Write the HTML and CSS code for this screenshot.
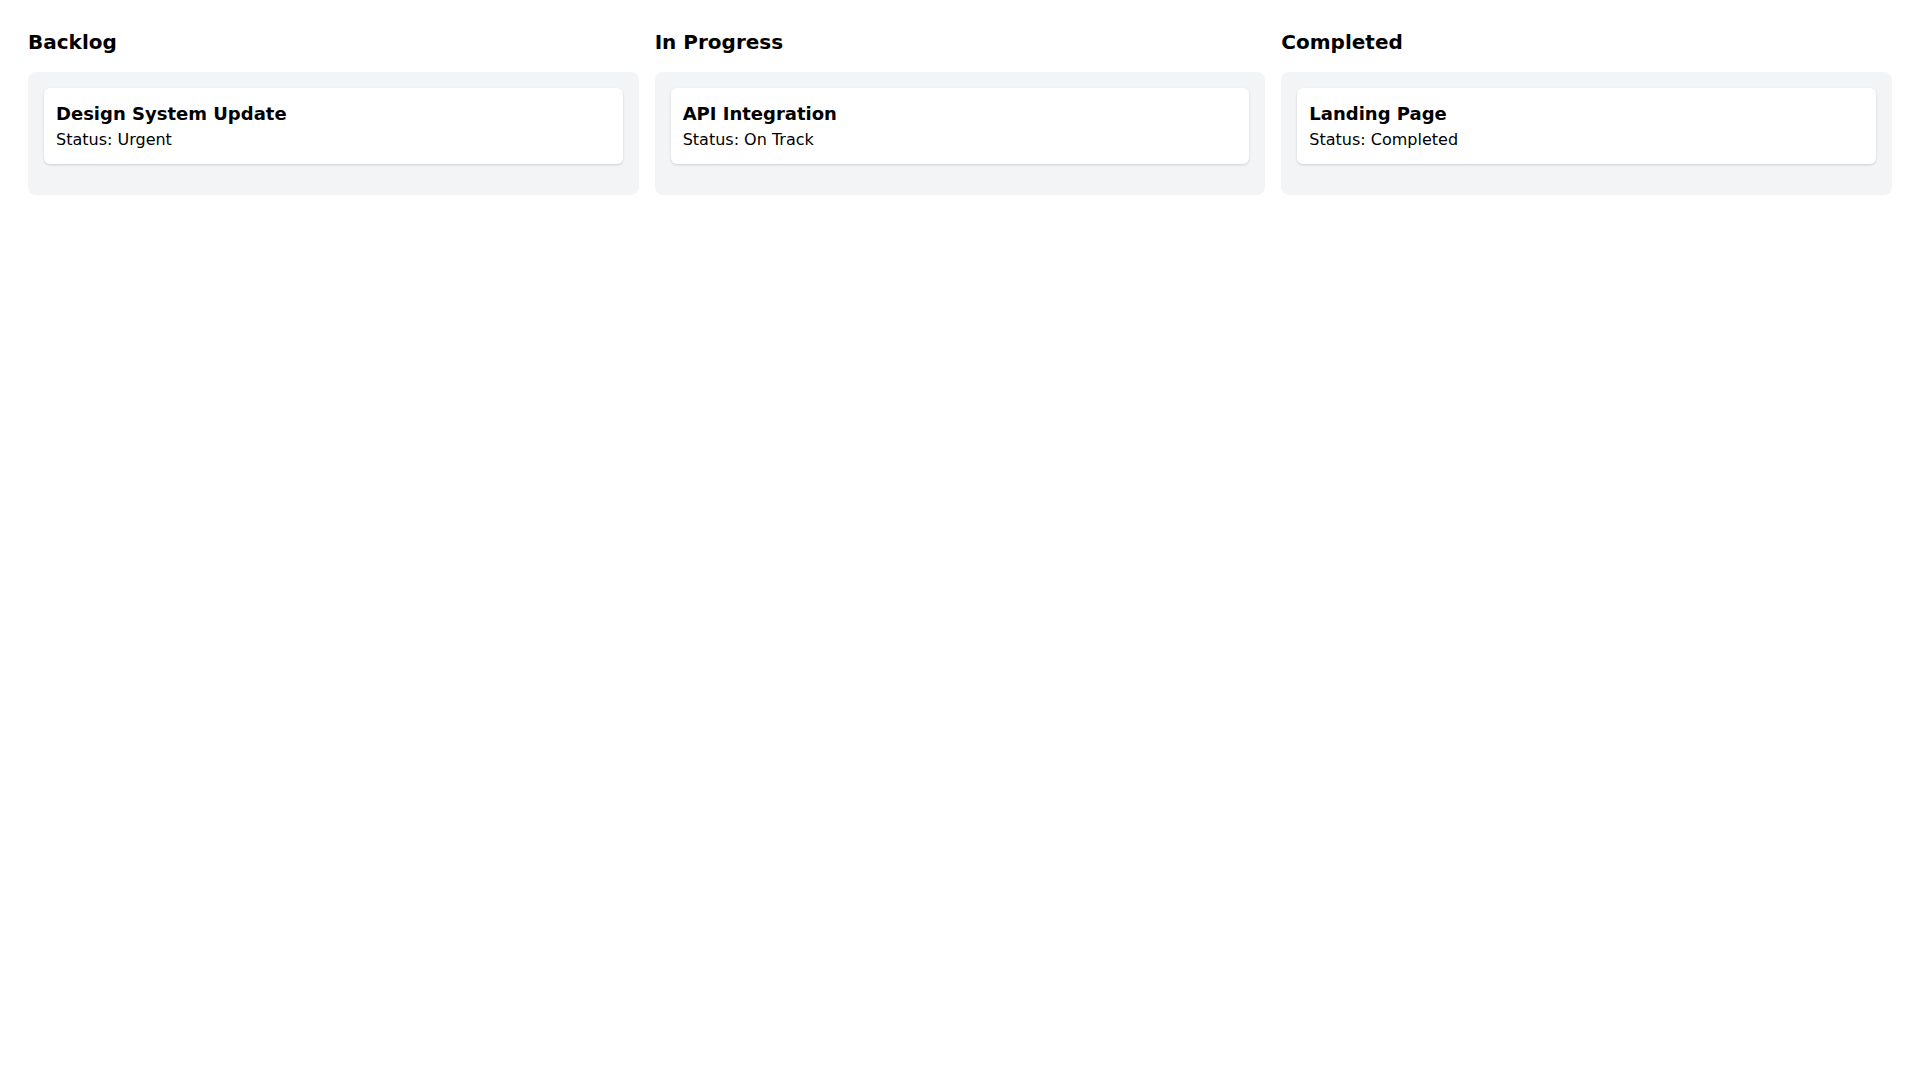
FILE: index.html
```html
<!DOCTYPE html>
<html lang="en">
<head>
<meta charset="utf-8">
<title>Board</title>
<link rel="stylesheet" href="styles.css">
</head>
<body>
<main class="board">
  <section class="column">
    <h2 class="column-title">Backlog</h2>
    <div class="column-body">
      <article class="card">
        <h3 class="card-title">Design System Update</h3>
        <p class="card-status">Status: Urgent</p>
      </article>
    </div>
  </section>
  <section class="column">
    <h2 class="column-title">In Progress</h2>
    <div class="column-body">
      <article class="card">
        <h3 class="card-title">API Integration</h3>
        <p class="card-status">Status: On Track</p>
      </article>
    </div>
  </section>
  <section class="column">
    <h2 class="column-title">Completed</h2>
    <div class="column-body">
      <article class="card">
        <h3 class="card-title">Landing Page</h3>
        <p class="card-status">Status: Completed</p>
      </article>
    </div>
  </section>
</main>
</body>
</html>
```

FILE: styles.css
```css
html, body {
  margin: 0;
  padding: 0;
  background: #ffffff;
}
body {
  font-family: "DejaVu Sans", sans-serif;
  color: #000000;
}
.board {
  display: grid;
  grid-template-columns: repeat(3, 1fr);
  gap: 16px;
  padding: 28px;
}
.column-title {
  margin: 0 0 16px;
  font-size: 20px;
  line-height: 28px;
  font-weight: 700;
}
.column-body {
  background: #f3f4f6;
  border-radius: 8px;
  padding: 16px 16px 31px;
  display: flex;
  flex-direction: column;
  gap: 12px;
}
.card {
  background: #ffffff;
  border-radius: 6px;
  padding: 12px;
  box-shadow: 0 1px 3px rgba(0, 0, 0, 0.1), 0 1px 2px rgba(0, 0, 0, 0.06);
}
.card-title {
  margin: 0;
  font-size: 18px;
  line-height: 28px;
  font-weight: 700;
}
.card-status {
  margin: 0;
  font-size: 16px;
  line-height: 24px;
}
```
